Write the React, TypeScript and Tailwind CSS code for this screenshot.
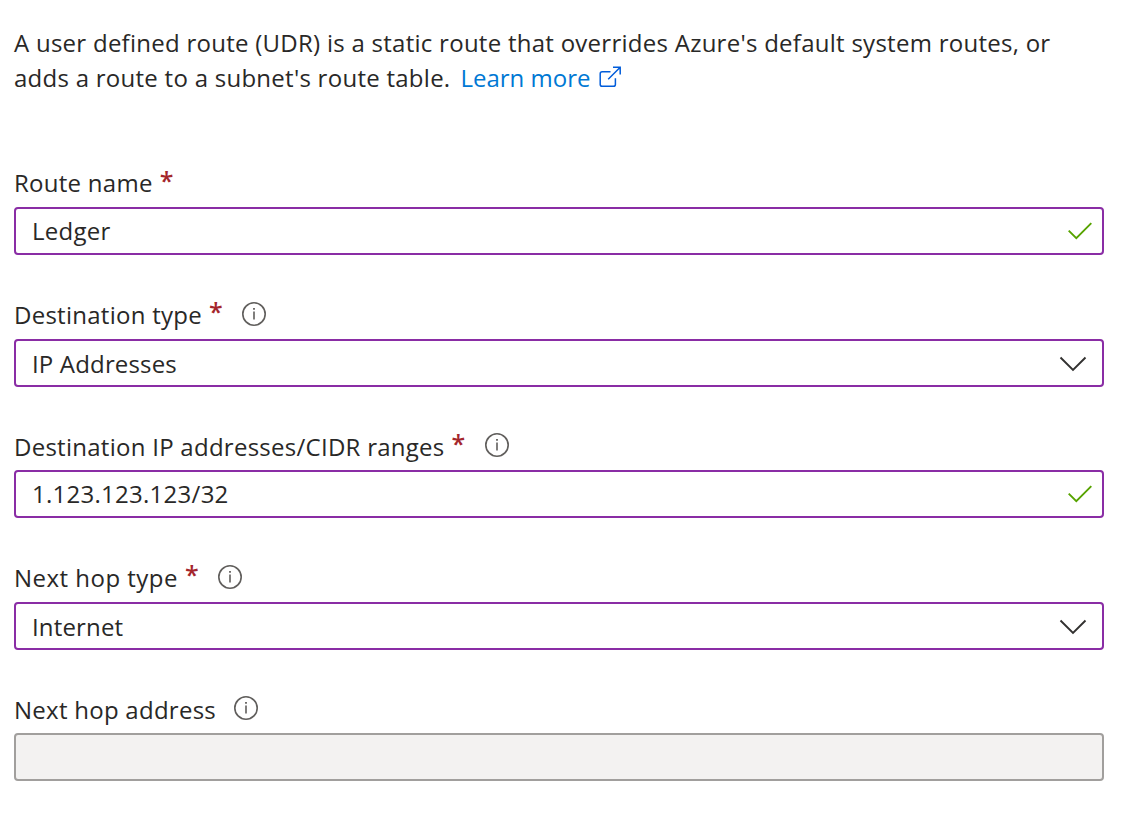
import React from "react";

function InfoIcon() {
  return (
    <svg width="24" height="24" viewBox="0 0 24 24" fill="none" aria-label="More information" className="shrink-0">
      <circle cx="12" cy="12" r="11.2" stroke="#605e5c" strokeWidth="1.6" />
      <path d="M12 9.6V17.6" stroke="#605e5c" strokeWidth="1.6" />
      <path d="M12 6V7.8" stroke="#605e5c" strokeWidth="1.8" />
    </svg>
  );
}

function CheckIcon() {
  return (
    <svg width="24" height="18" viewBox="0 0 24 18" fill="none" className="mr-[10px] shrink-0">
      <path d="M0.7 8.6L8.3 16.2L23.3 1.2" stroke="#57a300" strokeWidth="1.9" />
    </svg>
  );
}

function ChevronIcon() {
  return (
    <svg width="28" height="16" viewBox="0 0 28 16" fill="none" className="mr-[15px] mt-[2px] shrink-0">
      <path d="M1.5 1.5L14 14L26.5 1.5" stroke="#323130" strokeWidth="1.9" />
    </svg>
  );
}

function ExternalLinkIcon() {
  return (
    <svg width="24" height="24" viewBox="0 0 24 24" fill="none" stroke="#015cda" strokeWidth="1.5" className="ml-[9px] inline-block align-[-3px]">
      <path d="M11.5 5.7H3.2Q1.2 5.7 1.2 7.7V18.4Q1.2 20.2 3.2 20.2H14.4Q16.4 20.2 16.4 18.4V12.2" />
      <path d="M9.2 13.2L21.2 1.2M14 1.2H21.2V8.4" />
    </svg>
  );
}

type FieldProps = {
  label: string;
  labelClass?: string;
  required?: boolean;
  info?: boolean;
  value?: string;
  kind: "text" | "select" | "disabled";
};

function Field({ label, labelClass = "", required, info, value, kind }: FieldProps) {
  return (
    <div className="mb-[41.5px]">
      <div className="mb-[7px] flex h-[35px] items-center">
        <span className={labelClass}>{label}</span>
        {required && (
          <span className="-mt-[5px] ml-[7px] w-[13px] text-center text-[25px] font-semibold tracking-normal text-[#a4262c]">
            *
          </span>
        )}
        {info && (
          <span className={`${required ? "ml-5" : "ml-[18px]"} ${kind === "select" ? "mt-0" : "-mt-[1.5px]"}`}>
            <InfoIcon />
          </span>
        )}
      </div>
      <div
        className={
          kind === "disabled"
            ? "h-12 rounded-[4px] border-2 border-[#a19f9d] bg-[#f3f2f1]"
            : "flex h-12 items-center justify-between rounded-[4px] border-2 border-[#8a2da5] bg-white pl-4"
        }
      >
        {kind !== "disabled" && (
          <span className={kind === "select" ? "pt-[2px] tracking-[0.16px]" : "pb-[2px]"}>{value}</span>
        )}
        {kind === "text" && <CheckIcon />}
        {kind === "select" && <ChevronIcon />}
      </div>
    </div>
  );
}

export default function App() {
  return (
    <main className="h-[826px] w-[1122px] overflow-hidden bg-white pl-3.5 pr-[18px] pt-[25px] font-['Open_Sans',sans-serif] text-[24px] leading-[35px] tracking-[0.264px] text-[#292827]">
      <p className="mb-[70px] h-[70px]">
        <span className="whitespace-nowrap">
          A user defined route (UDR) is a static route that overrides Azure's default system routes, or
        </span>
        <br />
        adds a route to a subnet's route table.
        <a className="ml-[10px] tracking-normal text-[#0078d4]">
          Learn more
          <ExternalLinkIcon />
        </a>
      </p>
      <Field label="Route name" required value="Ledger" kind="text" />
      <Field label="Destination type" required info value="IP Addresses" kind="select" />
      <Field
        label="Destination IP addresses/CIDR ranges"
        labelClass="pt-[2px]"
        required
        info
        value="1.123.123.123/32"
        kind="text"
      />
      <Field label="Next hop type" labelClass="tracking-[0.48px]" required info value="Internet" kind="select" />
      <Field label="Next hop address" labelClass="pt-[2px]" info kind="disabled" />
    </main>
  );
}
